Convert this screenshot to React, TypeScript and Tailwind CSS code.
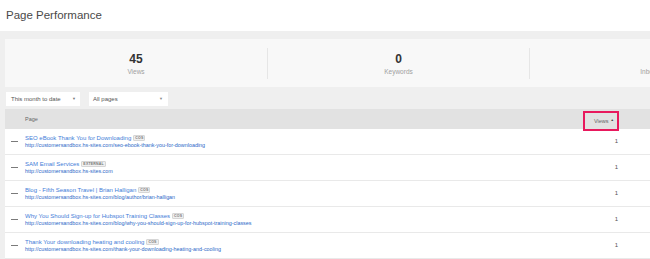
import React from "react";

const rows = [
  { title: "SEO eBook Thank You for Downloading", badge: "COS", url: "http://customersandbox.hs-sites.com/seo-ebook-thank-you-for-downloading" },
  { title: "SAM Email Services", badge: "EXTERNAL", url: "http://customersandbox.hs-sites.com" },
  { title: "Blog - Fifth Season Travel | Brian Halligan", badge: "COS", url: "http://customersandbox.hs-sites.com/blog/author/brian-halligan" },
  { title: "Why You Should Sign-up for Hubspot Training Classes", badge: "COS", url: "http://customersandbox.hs-sites.com/blog/why-you-should-sign-up-for-hubspot-training-classes" },
  { title: "Thank Your downloading heating and cooling", badge: "COS", url: "http://customersandbox.hs-sites.com/thank-your-downloading-heating-and-cooling" },
];

const stats = [
  { value: "45", label: "Views" },
  { value: "0", label: "Keywords" },
  { value: "2", label: "Inbound Links" },
  { value: "3", label: "Contacts" },
];

export default function App() {
  return (
    <div className="w-[650px] h-[259px] overflow-hidden bg-[#efefef] font-['Liberation_Sans',Arial,sans-serif]">
      <div className="h-[31px] bg-white flex items-center pl-[6px]">
        <h1 className="text-[11.5px] text-[#4a4a4a] leading-none">Page Performance</h1>
      </div>
      <div className="w-[1100px] pl-[5px] pt-[8px]">
        {/* stats card */}
        <div className="h-[48px] bg-[#f8f8f8] flex">
          {stats.map((s, i) => (
            <div key={s.label} className="w-[262px] h-full flex items-center">
              {i > 0 && <div className="w-px h-[31px] bg-[#e6e6e6]" />}
              <div className="flex-1 flex flex-col items-center pt-[2px]">
                <div className="text-[12px] font-bold text-[#333] leading-[14px]">{s.value}</div>
                <div className="text-[6.5px] text-[#a0a0a0] leading-[8px] mt-[2px]">{s.label}</div>
              </div>
            </div>
          ))}
        </div>
        {/* filters */}
        <div className="flex gap-[9px] mt-[5px] pl-[1px]">
          <div className="w-[74px] h-[14px] bg-white flex items-center justify-between pl-[5px] pr-[4px] text-[6px] text-[#555]">
            <span>This month to date</span>
            <span className="text-[4px] text-[#777]">▼</span>
          </div>
          <div className="w-[79px] h-[14px] bg-white flex items-center justify-between pl-[4px] pr-[5px] text-[6px] text-[#555]">
            <span>All pages</span>
            <span className="text-[4px] text-[#888]">▼</span>
          </div>
        </div>
        {/* table header */}
        <div className="mt-[3px] h-[20px] bg-[#e2e2e2] flex items-center">
          <div className="w-[575px] pl-[20px] text-[5.5px] text-[#666]">Page</div>
          <div className="w-[40px] h-full relative">
            <div className="absolute left-[3px] top-[2px] w-[36px] h-[20px] border-2 border-[#e8195d] flex items-center justify-end pr-[3px] gap-[2px] text-[5.5px] text-[#666]">
              <span>Views</span>
              <span className="text-[3.5px] text-[#444]">▲</span>
            </div>
          </div>
          <div className="flex-1" />
        </div>
        {/* rows */}
        {rows.map((r) => (
          <div key={r.title} className="h-[26px] bg-white border-b border-[#e9e9e9] flex items-center">
            <div className="w-[575px] flex items-center">
              <div className="w-[7px] h-px bg-[#7a7a7a] ml-[6px] mr-[7px]" />
              <div className="flex flex-col">
                <div className="flex items-center text-[6px] leading-[8px] text-[#3f7dd8]">
                  <span>{r.title}</span>
                  <span className="ml-[2px] px-[1px] h-[6px] flex items-center bg-[#efefef] border border-[#d6d6d6] rounded-[1px] text-[3.5px] font-bold text-[#777] tracking-[0.2px]">
                    {r.badge}
                  </span>
                </div>
                <div className="text-[5.4px] leading-[7px] text-[#2c69c8]">{r.url}</div>
              </div>
            </div>
            <div className="w-[40px] text-right pr-[2px] text-[6px] text-[#555]">1</div>
            <div className="flex-1" />
          </div>
        ))}
      </div>
    </div>
  );
}
